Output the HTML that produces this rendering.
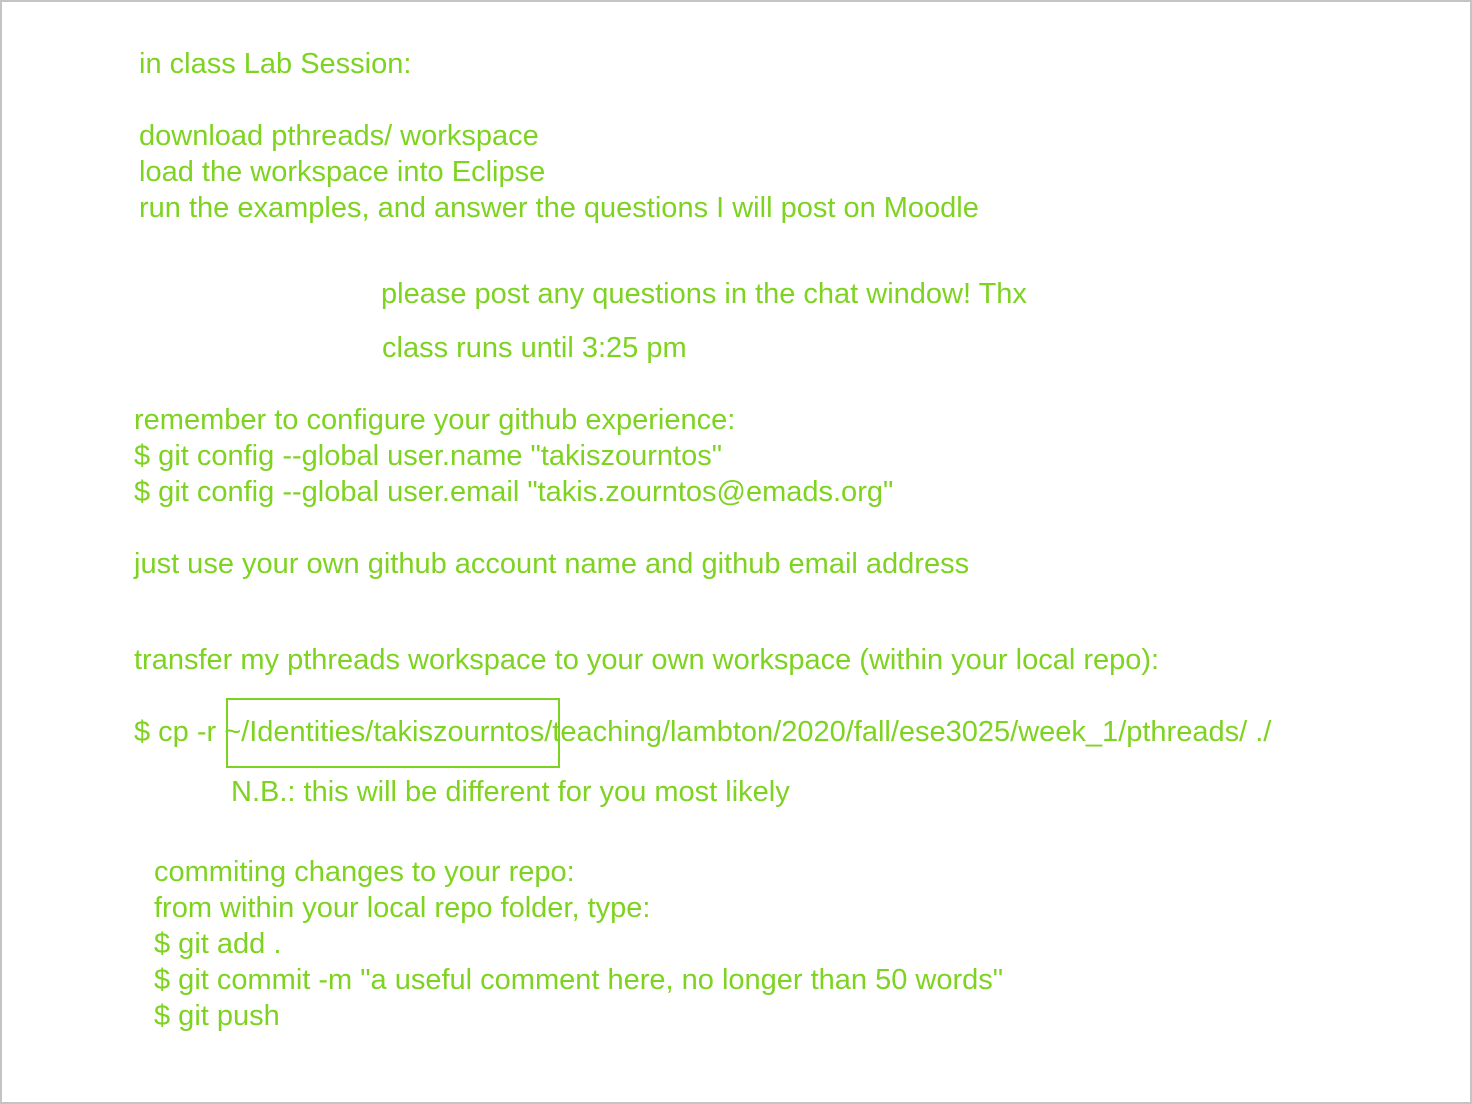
<!DOCTYPE html>
<html><head><meta charset="utf-8"><style>
html,body{margin:0;padding:0;background:#fff;}
body{width:1472px;height:1104px;position:relative;overflow:hidden;}
.frame{position:absolute;left:0;top:0;width:1468px;height:1100px;border:2px solid #c4c4c4;}
.t{position:absolute;font-family:"Liberation Sans",Arial,sans-serif;font-size:29px;line-height:36px;color:#7ed321;white-space:pre;}
.box{position:absolute;left:226px;top:698px;width:330px;height:66px;border:2px solid #7ed321;}
</style></head><body>
<div class="frame"></div>
<div class="t" style="left:139px;top:46px">in class Lab Session:</div>
<div class="t" style="left:139px;top:118px">download pthreads/ workspace
load the workspace into Eclipse
run the examples, and answer the questions I will post on Moodle</div>
<div class="t" style="left:381px;top:276px">please post any questions in the chat window! Thx</div>
<div class="t" style="left:382px;top:330px">class runs until 3:25 pm</div>
<div class="t" style="left:134px;top:402px">remember to configure your github experience:
$ git config --global user.name "takiszourntos"
$ git config --global user.email "takis.zourntos@emads.org"</div>
<div class="t" style="left:134px;top:546px">just use your own github account name and github email address</div>
<div class="t" style="left:134px;top:642px">transfer my pthreads workspace to your own workspace (within your local repo):</div>
<div class="box"></div>
<div class="t" style="left:134px;top:714px">$ cp -r ~/Identities/takiszourntos/teaching/lambton/2020/fall/ese3025/week_1/pthreads/ ./</div>
<div class="t" style="left:231px;top:774px">N.B.: this will be different for you most likely</div>
<div class="t" style="left:154px;top:854px">commiting changes to your repo:
from within your local repo folder, type:
$ git add .
$ git commit -m "a useful comment here, no longer than 50 words"
$ git push</div>
</body></html>
